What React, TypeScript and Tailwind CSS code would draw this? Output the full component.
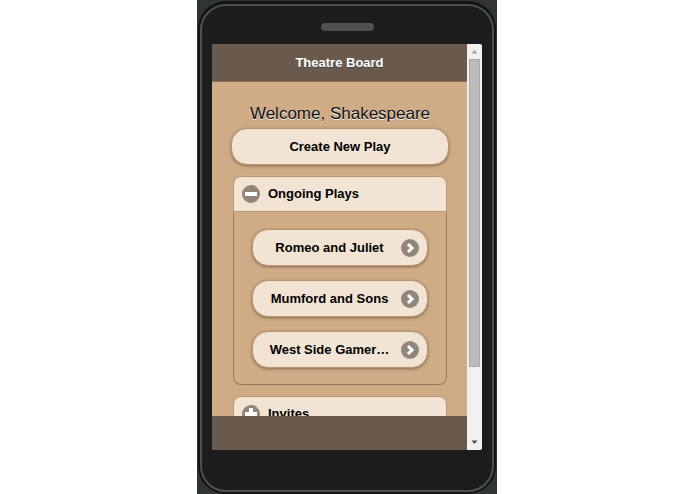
import { useState } from "react";

const plays = ["Romeo and Juliet", "Mumford and Sons", "West Side Gamer…"];

const raised =
  "h-[37px] rounded-2xl border border-[#b79675] bg-[#f1e4d5] font-bold shadow-[0_1px_3px_rgba(60,45,20,0.5)]";

function Badge({ path, width = 3 }: { path: string; width?: number }) {
  return (
    <svg viewBox="0 0 18 18" className="size-[18px] shrink-0" aria-hidden="true">
      <circle cx="9" cy="9" r="9" fill="#918679" />
      <path d={path} fill="none" stroke="#fff" strokeWidth={width} />
    </svg>
  );
}

function SectionButton({
  title,
  open,
  onToggle,
}: {
  title: string;
  open: boolean;
  onToggle: () => void;
}) {
  return (
    <button
      type="button"
      aria-expanded={open}
      onClick={onToggle}
      className={`flex h-9 w-full items-center gap-2 border border-[#b79675] bg-[#f1e4d5] px-2 text-left font-bold ${
        open ? "rounded-t-lg" : "rounded-lg"
      }`}
    >
      <Badge path={open ? "M3 9H15" : "M3 9H15M9 3V15"} width={4} />
      <span>{title}</span>
    </button>
  );
}

function ScrollTrack() {
  return (
    <div className="flex w-[15px] shrink-0 flex-col items-center bg-[#f1f1f1]" aria-hidden="true">
      <svg viewBox="0 0 15 15" className="size-[15px] shrink-0">
        <path d="M7.5 6L10.5 9.5H4.5Z" fill="#a3a3a3" />
      </svg>
      <div className="flex w-full flex-1 flex-col items-center">
        <div className="h-[82%] w-[11px] border border-[#a8a8a8] bg-[#bcbcbc]" />
      </div>
      <svg viewBox="0 0 15 15" className="size-[15px] shrink-0">
        <path d="M4.5 5.5H10.5L7.5 9Z" fill="#505050" />
      </svg>
    </div>
  );
}

export default function App() {
  const [playsOpen, setPlaysOpen] = useState(true);
  const [invitesOpen, setInvitesOpen] = useState(false);

  return (
    <div className="flex h-screen justify-center bg-white pr-px font-['Liberation_Sans',Arial,sans-serif] text-[13px] leading-4 text-black">
      <div className="flex w-[300px] max-w-full flex-col bg-[#303433] px-px pt-px">
        <div className="flex min-h-0 flex-1 flex-col rounded-[28px] bg-[#131313] px-[2px] pt-[3px] pb-[2px]">
          <div className="flex min-h-0 flex-1 flex-col rounded-[26px] border-2 border-[#505050] bg-[#1c1c1c] px-[10px] pt-[17px] pb-10">
            <div className="mx-auto h-2 w-[53px] shrink-0 rounded-[4px] bg-[#505050]" />
            <div className="mt-[13px] flex min-h-0 flex-1 overflow-hidden rounded-[2px]">
              <div className="flex min-w-0 flex-1 flex-col bg-[#cfab86] [text-shadow:0_1px_0_#f3f3f3]">
                <header className="flex h-[38px] shrink-0 items-center justify-center border-b border-[#8d735b] bg-[#6a5a4d] text-white [text-shadow:0_1px_0_#444]">
                  <h1 className="font-bold">Theatre Board</h1>
                </header>
                <main className="min-h-0 flex-1 overflow-hidden pt-5 pr-[18px] pb-0 pl-[19px]">
                  <p className="mb-[2px] text-center text-[17px] leading-6 text-[#111]">
                    Welcome, Shakespeare
                  </p>
                  <button type="button" className={`w-full ${raised}`}>
                    Create New Play
                  </button>
                  <section className="mx-[2px] mt-[11px]">
                    <SectionButton
                      title="Ongoing Plays"
                      open={playsOpen}
                      onToggle={() => setPlaysOpen(!playsOpen)}
                    />
                    {playsOpen && (
                      <ul className="flex flex-col gap-[14px] rounded-b-lg border border-t-0 border-[#97765a] px-[18px] pt-[17px] pb-4">
                        {plays.map((play) => (
                          <li key={play}>
                            <button
                              type="button"
                              className={`flex w-full items-center gap-2 pr-2 pl-[13px] ${raised}`}
                            >
                              <span className="min-w-0 flex-1 truncate text-center">{play}</span>
                              <Badge path="M7 5L11 9L7 13" />
                            </button>
                          </li>
                        ))}
                      </ul>
                    )}
                  </section>
                  <section className="mx-[2px] mt-[11px]">
                    <SectionButton
                      title="Invites"
                      open={invitesOpen}
                      onToggle={() => setInvitesOpen(!invitesOpen)}
                    />
                  </section>
                </main>
                <footer className="h-[34px] shrink-0 bg-[#6a5a4d]" />
              </div>
              <ScrollTrack />
            </div>
          </div>
        </div>
      </div>
    </div>
  );
}
